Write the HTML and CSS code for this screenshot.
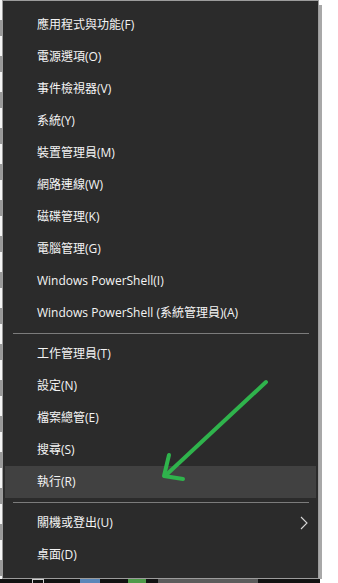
FILE: index.html
```html
<!doctype html>
<html>
	<head>
		<meta charset="utf-8" />
		<title>Win+X</title>
		<link rel="stylesheet" href="styles.css">
	</head>
	<body>
		<div class="screen">
			<div class="desk">
				<div class="edge"></div>
				<nav class="menu">
					<div class="item">應用程式與功能(F)</div>
					<div class="item">電源選項(O)</div>
					<div class="item">事件檢視器(V)</div>
					<div class="item">系統(Y)</div>
					<div class="item">裝置管理員(M)</div>
					<div class="item">網路連線(W)</div>
					<div class="item">磁碟管理(K)</div>
					<div class="item">電腦管理(G)</div>
					<div class="item">Windows PowerShell(I)</div>
					<div class="item">Windows PowerShell (系統管理員)(A)</div>
					<div class="sep"></div>
					<div class="item">工作管理員(T)</div>
					<div class="item">設定(N)</div>
					<div class="item">檔案總管(E)</div>
					<div class="item">搜尋(S)</div>
					<div class="item item_on">執行(R)</div>
					<div class="sep"></div>
					<div class="item item_more">
						<span>關機或登出(U)</span>
						<svg class="chev" width="8" height="14" viewBox="0 0 8 14">
							<path d="M1 1 L7 7 L1 13" fill="none" stroke="#d8d8d8" stroke-width="1.1" />
						</svg>
					</div>
					<div class="item">桌面(D)</div>
				</nav>
				<div class="shade"></div>
			</div>
			<div class="taskbar">
				<span class="tb tb_box"></span>
				<span class="tb tb_blue"></span>
				<span class="tb tb_green"></span>
				<span class="tb tb_text"></span>
			</div>
			<!-- hand drawn annotation on top of the screenshot -->
			<svg class="mark" width="338" height="583" viewBox="0 0 338 583">
				<g fill="none" stroke="#2fb34c" stroke-width="4" stroke-linecap="round" stroke-linejoin="round">
					<path d="M266 382 L165 476" />
					<path d="M169 455 L164 476 L183 479" />
				</g>
			</svg>
		</div>
	</body>
</html>
```

FILE: styles.css
```css
body {
	margin : 0;
	background : #ffffff;
}
.screen {
	position : relative;
	width : 338px;
	height : 583px;
	overflow : hidden;
	font-family : "Open Sans", "Noto Sans CJK TC", sans-serif;
	font-size : 12px;
}
.desk {
	display : flex;
	height : 579px;
}
.edge {
	width : 2px;
	background : repeating-linear-gradient(#f4f4f4 0 20px, #9a9a9a 20px 36px);
}
.menu {
	box-sizing : border-box;
	width : 317px;
	height : 579px;
	padding : 8px 0 7px;
	background : #2b2b2b;
	border : 1px solid #9c9c9c;
	color : #f4f4f4;
}
.item {
	height : 32px;
	line-height : 32px;
	margin : 0 2px;
	padding-left : 32px;
	white-space : nowrap;
}
.item_on {
	background : #414141;
}
.item_more {
	display : flex;
	justify-content : space-between;
	align-items : center;
	padding-right : 8px;
}
.chev {
	display : block;
}
.sep {
	height : 1px;
	margin : 4px 9px 4px 10px;
	background : #7c7c7c;
}
.shade {
	width : 3px;
	margin-top : 5px;
	background : #a8a8a8;
}
.taskbar {
	display : flex;
	align-items : flex-end;
	gap : 0;
	width : 320px;
	height : 4px;
	background : #121212;
}
.tb {
	display : block;
	height : 4px;
}
.tb_box {
	width : 12px;
	margin-left : 32px;
	border : 1px solid #cfcfcf;
	border-bottom : none;
	box-sizing : border-box;
}
.tb_blue {
	width : 20px;
	margin-left : 36px;
	background : #5a86b8;
}
.tb_green {
	width : 18px;
	margin-left : 28px;
	background : #4f9a4a;
}
.tb_text {
	width : 100px;
	margin-left : 12px;
	background : #5c5c5c;
}
.mark {
	position : absolute;
	left : 0;
	top : 0;
	pointer-events : none;
}
```
